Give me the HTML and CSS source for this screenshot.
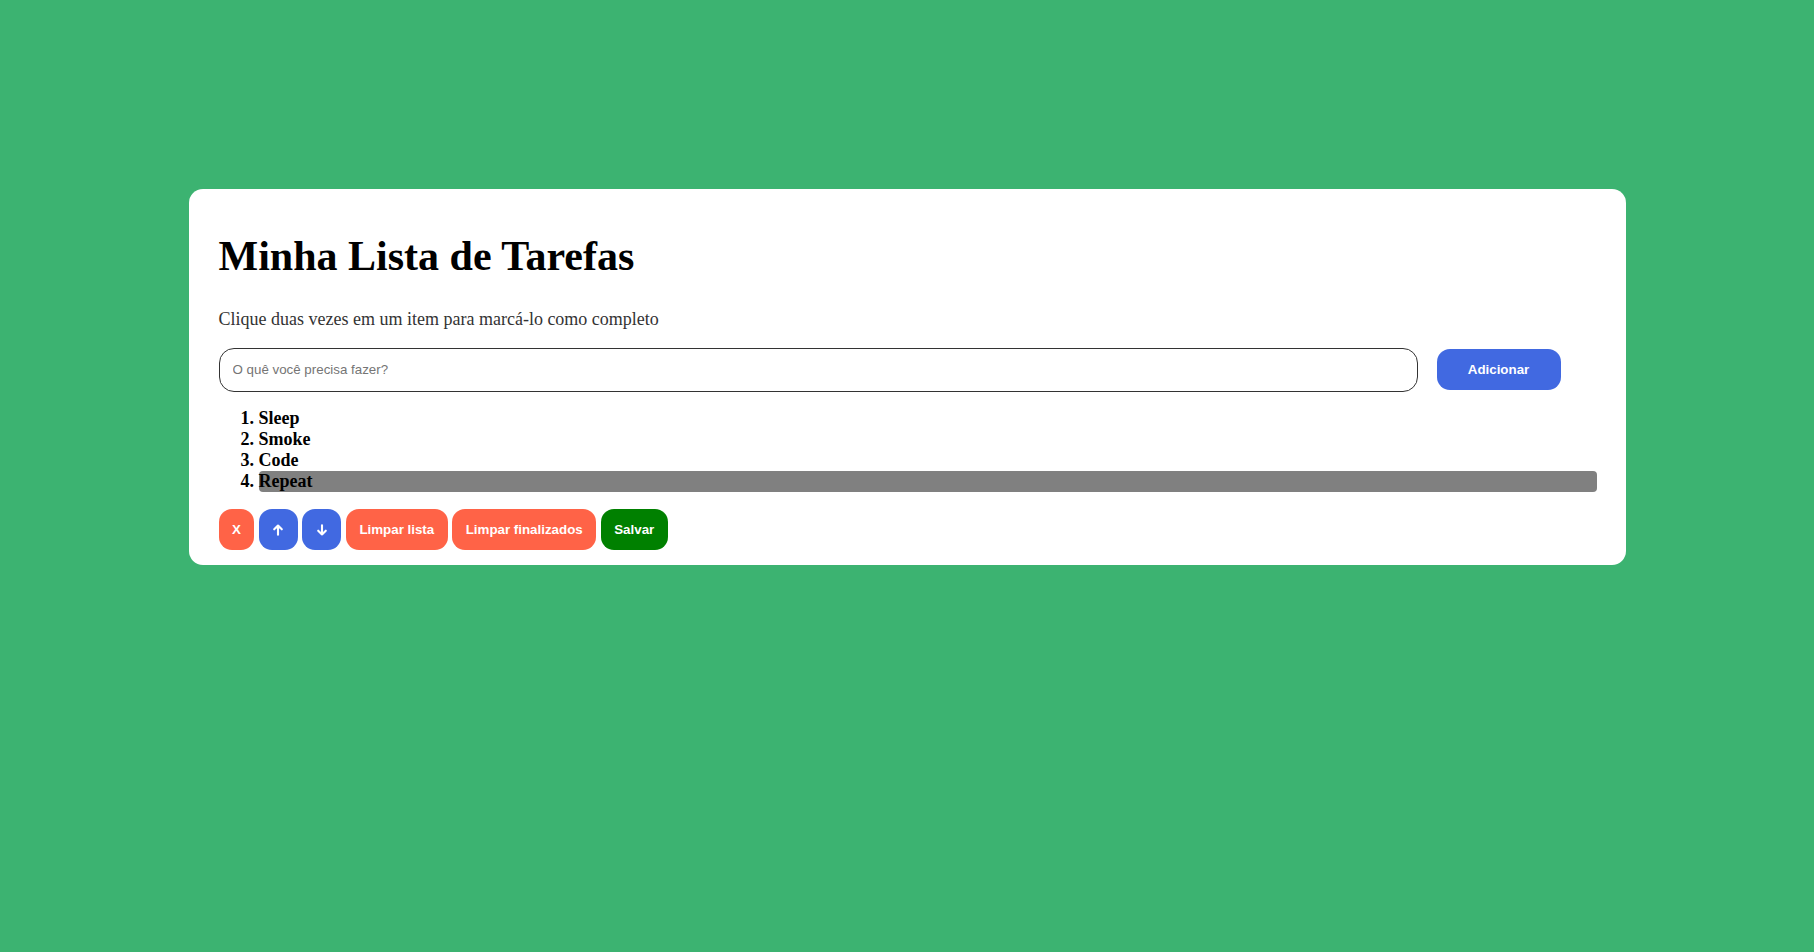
FILE: index.html
```html
<!DOCTYPE html>
<html lang="pt-BR">
<head>
<meta charset="utf-8">
<title>Minha Lista de Tarefas</title>
<link rel="stylesheet" href="styles.css">
</head>
<body>
<main class="card">
  <h1 class="title">Minha Lista de Tarefas</h1>
  <p class="hint">Clique duas vezes em um item para marcá-lo como completo</p>
  <div class="add-row">
    <input class="task-input" type="text" placeholder="O quê você precisa fazer?">
    <button class="btn btn-blue btn-add">Adicionar</button>
  </div>
  <ol class="tasks">
    <li class="task">Sleep</li>
    <li class="task">Smoke</li>
    <li class="task">Code</li>
    <li class="task task-selected">Repeat</li>
  </ol>
  <div class="actions">
    <button class="btn btn-red">X</button>
    <button class="btn btn-blue btn-icon" aria-label="Mover para cima"><svg class="arrow" viewBox="0 0 12 12" width="12" height="12"><path d="M6 10.8V1.6M2.2 5.3L6 1.5l3.8 3.8" fill="none" stroke="#fff" stroke-width="2.1" stroke-linecap="round" stroke-linejoin="round"/></svg></button>
    <button class="btn btn-blue btn-icon" aria-label="Mover para baixo"><svg class="arrow" viewBox="0 0 12 12" width="12" height="12"><path d="M6 1.2v9.2M2.2 6.7L6 10.5l3.8-3.8" fill="none" stroke="#fff" stroke-width="2.1" stroke-linecap="round" stroke-linejoin="round"/></svg></button>
    <button class="btn btn-red">Limpar lista</button>
    <button class="btn btn-red">Limpar finalizados</button>
    <button class="btn btn-green">Salvar</button>
  </div>
</main>
</body>
</html>
```

FILE: styles.css
```css
html, body {
  margin: 0;
  padding: 0;
}

body {
  background: #3cb371;
  font-family: "Liberation Serif", "Times New Roman", serif;
  font-size: 18px;
  min-height: 952px;
  padding-top: 189px;
  box-sizing: border-box;
}

.card {
  display: block;
  box-sizing: border-box;
  width: 1437px;
  margin: 0 auto;
  background: #fff;
  border-radius: 14px;
  padding: 43px 29px 15px 30px;
}

.title {
  margin: 0 0 28.5px;
  font-size: 42px;
  font-weight: bold;
  color: #000;
  line-height: normal;
}

.hint {
  margin: 0 0 18px;
  color: #333;
  font-size: 18px;
}

.add-row {
  display: flex;
  align-items: center;
  gap: 19px;
}

.task-input {
  box-sizing: border-box;
  width: 1199px;
  height: 44px;
  margin: 0;
  padding: 0 13px;
  border: 1px solid #333;
  border-radius: 15px;
  font-family: "Liberation Sans", Arial, sans-serif;
  font-size: 13.333px;
  color: #000;
  background: #fff;
  outline: none;
}

.task-input::placeholder {
  color: #757575;
}

.btn {
  display: inline-flex;
  align-items: center;
  justify-content: center;
  box-sizing: border-box;
  height: 41px;
  margin: 0;
  padding: 0 13.5px;
  border: none;
  border-radius: 13px;
  font-family: "Liberation Sans", Arial, sans-serif;
  font-size: 13.333px;
  font-weight: bold;
  color: #fff;
  cursor: pointer;
}

.btn-add {
  width: 124px;
  padding: 0;
  margin-top: -1px;
}

.btn-blue {
  background: #4169e1;
}

.btn-red {
  background: #ff6347;
}

.btn-green {
  background: #008000;
}

.btn-icon {
  width: 39px;
  padding: 0;
}

.arrow {
  display: block;
}

.tasks {
  margin: 16.5px 0 17px;
  padding-left: 40px;
  font-weight: bold;
  font-size: 18px;
  color: #000;
}

.task {
  line-height: normal;
}

.task-selected {
  background: #808080;
  border-radius: 4px;
}

.actions {
  display: flex;
  gap: 4.5px;
}
```
